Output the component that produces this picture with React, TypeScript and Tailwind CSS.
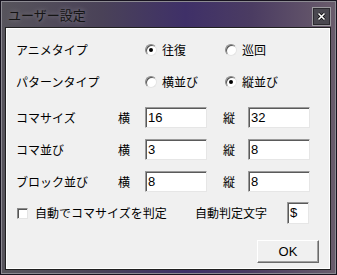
import React from 'react';

const Radio: React.FC<{ checked?: boolean; label: string }> = ({ checked, label }) => (
  <label className="flex items-center gap-[5px]">
    <span className="flex h-[12px] w-[12px] items-center justify-center rounded-full border border-t-[#8a8a8a] border-l-[#8a8a8a] border-r-[#e4e4e4] border-b-[#e4e4e4] bg-white shadow-[inset_1px_1px_0_#555]">
      {checked && <span className="h-[4px] w-[4px] rounded-full bg-black" />}
    </span>
    <span>{label}</span>
  </label>
);

const Field: React.FC<{ value: string; w?: string }> = ({ value, w = 'w-[62px]' }) => (
  <div
    className={`${w} h-full border border-t-[#9a9a9a] border-l-[#9a9a9a] border-r-[#e6e6e6] border-b-[#e6e6e6] bg-white pl-[2px] shadow-[inset_1px_1px_0_#5a5a5a] flex items-center font-['Liberation_Sans',sans-serif] text-[13px] text-black`}
  >
    {value}
  </div>
);

const SizeRow: React.FC<{ label: string; x: string; y: string; mt: string }> = ({ label, x, y, mt }) => (
  <div className={`flex h-[21px] items-center ${mt}`}>
    <span className="w-[102px]">{label}</span>
    <span className="w-[27px]">横</span>
    <Field value={x} />
    <span className="ml-[16px] w-[25px]">縦</span>
    <Field value={y} />
  </div>
);

export default function App() {
  return (
    <div className="h-[275px] w-[337px] bg-[#17131f] p-[1px] font-['Noto_Sans_CJK_JP',sans-serif] text-[12px] text-black">
      <div className="flex h-full flex-col border border-[#8c8a92] bg-[linear-gradient(90deg,#57545c_0%,#4a4258_30%,#3f3068_55%,#4b3c62_75%,#6a5c6c_100%)]">
        {/* title bar */}
        <div className="flex h-[25px] items-center justify-between pl-[6px] pr-[4px]">
          <span className="text-[13px] text-[#151515] [text-shadow:0_0_5px_rgba(255,255,255,0.35)]">ユーザー設定</span>
          <div className="mt-[4px] flex h-[19px] w-[19px] items-center justify-center border border-[#9c9a9f] bg-[#4a4850] shadow-[inset_0_0_0_1px_#2c2a30]">
            <svg width="9" height="9" viewBox="0 0 9 9">
              <path d="M1.5 1.5 L7.5 7.5 M7.5 1.5 L1.5 7.5" stroke="#000" strokeWidth="3" />
              <path d="M1.5 1.5 L7.5 7.5 M7.5 1.5 L1.5 7.5" stroke="#fff" strokeWidth="1.6" />
            </svg>
          </div>
        </div>

        {/* client area */}
        <div className="ml-[3px] mr-[4px] h-[243px] border border-[#202020] bg-[#f0f0f0] shadow-[inset_1px_1px_0_#ffffff,inset_-1px_-1px_0_#ffffff] pl-[10px] pt-[12px]">
          <div className="flex h-[20px] items-center">
            <span className="w-[129px]">アニメタイプ</span>
            <div className="w-[80px]">
              <Radio checked label="往復" />
            </div>
            <Radio label="巡回" />
          </div>
          <div className="mt-[12px] flex h-[20px] items-center">
            <span className="w-[129px]">パターンタイプ</span>
            <div className="w-[80px]">
              <Radio label="横並び" />
            </div>
            <Radio checked label="縦並び" />
          </div>

          <SizeRow label="コマサイズ" x="16" y="32" mt="mt-[15px]" />
          <SizeRow label="コマ並び" x="3" y="8" mt="mt-[11px]" />
          <SizeRow label="ブロック並び" x="8" y="8" mt="mt-[11px]" />

          <div className="mt-[10px] flex h-[22px] items-center">
            <label className="flex w-[179px] items-center gap-[7px] pl-[1px]">
              <span className="h-[11px] w-[11px] border border-t-[#8a8a8a] border-l-[#8a8a8a] border-r-[#e4e4e4] border-b-[#e4e4e4] bg-white shadow-[inset_1px_1px_0_#555]" />
              <span>自動でコマサイズを判定</span>
            </label>
            <span className="w-[92px]">自動判定文字</span>
            <Field value="$" w="w-[22px]" />
          </div>

          <div className="mt-[16px] flex justify-end pr-[11px]">
            <button className="h-[23px] w-[62px] border border-t-white border-l-white border-r-[#6a6a6a] border-b-[#6a6a6a] bg-[#f0f0f0] shadow-[inset_-1px_-1px_0_#a0a0a0] font-['Liberation_Sans',sans-serif] text-[13px] text-black">
              OK
            </button>
          </div>
        </div>
      </div>
    </div>
  );
}
